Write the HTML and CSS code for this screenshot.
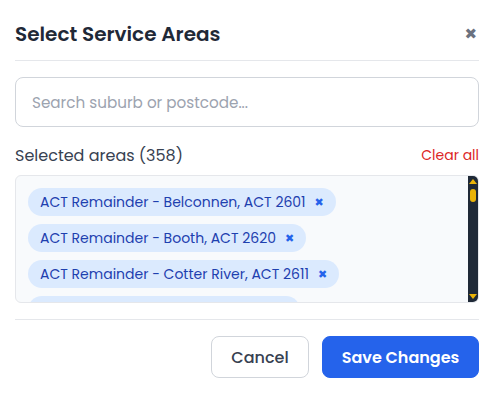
FILE: index.html
```html
<!DOCTYPE html>
<html lang="en">
<head>
<meta charset="utf-8">
<title>Select Service Areas</title>
<link rel="stylesheet" href="styles.css">
</head>
<body>
<div class="modal">
  <header class="modal-header">
    <h2 class="modal-title">Select Service Areas</h2>
    <button class="close-btn" aria-label="Close">&#x2716;</button>
  </header>
  <div class="modal-body">
    <input class="search" type="text" placeholder="Search suburb or postcode...">
    <div class="selected-row">
      <span class="selected-label">Selected areas (358)</span>
      <button class="clear-all">Clear all</button>
    </div>
    <div class="chip-box">
      <div class="chip-list">
        <span class="chip">ACT Remainder - Belconnen, ACT 2601 <span class="chip-x">&#x2716;</span></span>
        <span class="chip">ACT Remainder - Booth, ACT 2620 <span class="chip-x">&#x2716;</span></span>
        <span class="chip">ACT Remainder - Cotter River, ACT 2611 <span class="chip-x">&#x2716;</span></span>
        <span class="chip">ACT Remainder - Coree, ACT 2611 <span class="chip-x">&#x2716;</span></span>
        <span class="chip">ACT Remainder - Hall, ACT 2618 <span class="chip-x">&#x2716;</span></span>
      </div>
      <div class="scrollbar" aria-hidden="true">
        <svg class="sb-arrow" width="8" height="5" viewBox="0 0 8 5"><path d="M4 0 8 5 0 5z" fill="#eab308"/></svg>
        <div class="sb-track"><div class="sb-thumb"></div></div>
        <svg class="sb-arrow" width="8" height="5" viewBox="0 0 8 5"><path d="M0 0 8 0 4 5z" fill="#eab308"/></svg>
      </div>
    </div>
  </div>
  <footer class="modal-footer">
    <button class="btn btn-cancel">Cancel</button>
    <button class="btn btn-save">Save Changes</button>
  </footer>
</div>
</body>
</html>
```
FILE: styles.css
```css
* { box-sizing: border-box; }
html, body { margin: 0; background: #fff; }
body {
  font-family: "Poppins", "Open Sans", "DejaVu Sans", sans-serif;
  color: #1f2937;
  padding: 0 23px 0 15px;
}
.modal { display: flex; flex-direction: column; }
.modal-header {
  display: flex;
  align-items: center;
  justify-content: space-between;
  padding: 20px 0 12px;
  border-bottom: 1px solid #e5e7eb;
}
.modal-title {
  margin: 0;
  font-size: 20px;
  line-height: 28px;
  font-weight: 600;
  color: #1f2937;
}
.close-btn {
  border: 0;
  background: none;
  padding: 0 2px 0 0;
  font-size: 15px;
  color: #6b7280;
  line-height: 1;
  font-family: "DejaVu Sans", sans-serif;
}
.modal-body { display: flex; flex-direction: column; padding-top: 16px; }
.search {
  height: 50px;
  border: 1px solid #d1d5db;
  border-radius: 8px;
  padding: 0 16px;
  font-family: inherit;
  font-size: 15.2px;
  color: #1f2937;
  outline: none;
}
.search::placeholder { color: #9ca3af; }
.selected-row {
  display: flex;
  justify-content: space-between;
  align-items: center;
  margin-top: 16px;
  height: 24px;
}
.selected-label { font-size: 16px; color: #374151; }
.clear-all {
  border: 0; background: none; padding: 0;
  font-family: inherit;
  font-size: 14px;
  color: #dc2626;
}
.chip-box {
  margin-top: 8px;
  height: 128px;
  overflow: hidden;
  background: #f8fafc;
  border: 1px solid #e5e7eb;
  border-radius: 6px;
  display: flex;
}
.chip-list {
  flex: 1;
  min-width: 0;
  padding: 12px;
  display: flex;
  flex-direction: column;
  align-items: flex-start;
  gap: 8px;
  overflow: hidden;
}
.scrollbar {
  flex: none;
  width: 10px;
  background: #1f2937;
  display: flex;
  flex-direction: column;
  align-items: center;
  padding: 3px 0;
  gap: 3px;
}
.sb-arrow { flex: none; display: block; }
.sb-track { flex: 1; width: 100%; display: flex; justify-content: center; padding-top: 2px; }
.sb-thumb {
  width: 6px;
  height: 13px;
  border-radius: 3px;
  background: #eab308;
}
.chip {
  flex: none;
  display: inline-flex;
  align-items: center;
  gap: 9px;
  height: 28px;
  padding: 0 12px;
  border-radius: 14px;
  background: #dbeafe;
  color: #1e40af;
  font-size: 14px;
  white-space: nowrap;
}
.chip-x {
  font-family: "DejaVu Sans", sans-serif;
  font-size: 11px;
  color: #2563eb;
}
.modal-footer {
  display: flex;
  justify-content: flex-end;
  gap: 13px;
  margin-top: 16px;
  padding-top: 16px;
  border-top: 1px solid #e5e7eb;
}
.btn {
  height: 42px;
  border-radius: 8px;
  font-family: inherit;
  font-size: 16px;
  padding: 0;
  display: flex;
  align-items: center;
  justify-content: center;
}
.btn-cancel {
  background: #fff;
  border: 1px solid #d1d5db;
  color: #374151;
  font-weight: 500;
  width: 98px;
}
.btn-save {
  background: #2563eb;
  border: 1px solid #2563eb;
  color: #fff;
  font-weight: 600;
  width: 157px;
}
```
